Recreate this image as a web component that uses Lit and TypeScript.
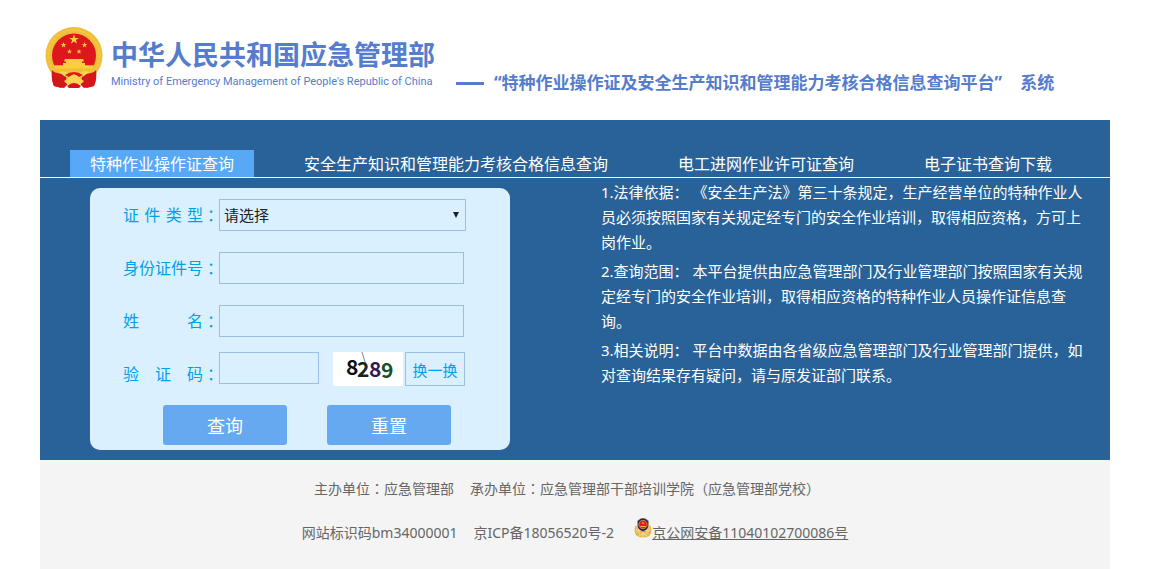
import { LitElement, html, css, svg } from "lit";
import { customElement, state } from "lit/decorators.js";

const STAR =
  "M0-1 .225-.309 .951-.309 .363 .118 .588 .809 0 .382-.588 .809-.363 .118-.951-.309-.225-.309Z";

const star = (x: number, y: number, size: number) =>
  svg`<path d=${STAR} fill="#f9cf3c" transform="translate(${x} ${y}) scale(${size})" />`;

@customElement("national-emblem")
class NationalEmblem extends LitElement {
  static styles = css`
    :host { display: block; }
    svg { display: block; }
  `;

  render() {
    return html`
      <svg width="58" height="62" viewBox="0 0 58 62" role="img" aria-label="国徽">
        <path d="M9 44 C6 49 7 54 9 59 L19 61 L24 56 H34 L39 61 L49 59 C51 54 52 49 49 44 Z" fill="#d5161b" />
        <circle cx="29" cy="28.500" r="28.500" fill="#efbe3a" />
        <circle cx="29" cy="28.500" r="25.500" fill="none" stroke="#f3c843" stroke-width="2" stroke-dasharray="3 1" />
        <circle cx="29" cy="28.500" r="22" fill="#dd171c" />
        <path d="M8 38.500 H50 L45 48 L35 53 H23 L13 48 Z" fill="#f2be35" />
        <path d="M7 43 C11 48 17 45 21 49 C22 53 20 59 16 61 L9 59 C7 54 6 49 7 43 Z" fill="#d5161b" />
        <path d="M51 43 C47 48 41 45 37 49 C36 53 38 59 42 61 L49 59 C51 54 52 49 51 43 Z" fill="#d5161b" />
        <path d="M14 45 C20 43 24 46 29 50 C34 46 38 43 44 45 L39 49 L34 51 L39 54 L35 58 C32 55 26 55 23 58 L19 54 L24 51 L19 49 Z" fill="#f9d553" />
        <path d="M20 48 Q29 42 38 48 L34 50 L29 47 L24 50 Z" fill="#dd171c" />
        <ellipse cx="29" cy="50.500" rx="4.500" ry="2.500" fill="#f9d553" />
        <path d="M22 59 Q29 53 36 59 L34 61 H24 Z" fill="#d5161b" />
        <path d="M20 32 H38 L39 34.500 H37 V36 H40 V39 H18 V36 H21 V34.500 H19 Z M10 38.500 H48 V41.500 H10 Z" fill="#f9cf3c" />
        ${star(29, 12.5, 5.2)} ${star(18.5, 18, 3)} ${star(39.5, 18, 3)} ${star(24.5, 24.5, 2.8)}
        ${star(34, 24.5, 2.8)}
      </svg>
    `;
  }
}

@customElement("police-badge")
class PoliceBadge extends LitElement {
  static styles = css`
    :host { display: block; }
    svg { display: block; }
  `;

  render() {
    return html`
      <svg width="18" height="20" viewBox="0 0 18 20" aria-hidden="true">
        <path d="M2 7 C0 10 0 16 3 18 Q9 21 15 18 C18 16 18 10 16 7 L13 13 H5 Z" fill="#ebb550" />
        <path d="M2 11 L6 16 M16 11 L12 16 M5 18 L9 15 L13 18 M9 14 V19" stroke="#fbe09a" stroke-width="1" fill="none" />
        <path d="M9 0 L12 1 L14.500 3 V8 Q14 12 9 13.500 Q4 12 3.500 8 V3 L6 1 Z" fill="#18246a" stroke="#c8953c" stroke-width=".6" />
        <circle cx="9" cy="6.500" r="4.200" fill="#da2318" stroke="#efa93a" stroke-width=".7" />
        <path d="M6.500 8.500 H11.500 M9 4 V6" stroke="#f6c545" stroke-width="1" />
      </svg>
    `;
  }
}

@customElement("captcha-image")
class CaptchaImage extends LitElement {
  static styles = css`
    :host { display: block; }
    svg { display: block; }
    .digit { font: bold 21px "Noto Sans CJK SC", sans-serif; }
  `;

  render() {
    return html`
      <svg width="70" height="34" viewBox="0 0 70 34" role="img" aria-label="验证码图片">
        <rect width="70" height="34" fill="#fff" />
        <path d="M29 0 L33 13" stroke="#7d8a80" stroke-width="1" />
        <text class="digit" x="13" y="23" fill="#0d0d14">8</text>
        <text class="digit" x="24" y="25" fill="#16261f">2</text>
        <text class="digit" x="36" y="25" fill="#35174f">8</text>
        <text class="digit" x="48" y="26" fill="#17502b">9</text>
      </svg>
    `;
  }
}

@customElement("query-form")
class QueryForm extends LitElement {
  static styles = css`
    :host { display: block; }
    .panel {
      display: flex;
      flex-direction: column;
      gap: 15px;
      padding: 11px 44px 5px 33px;
      border-radius: 10px;
      background: #dbf0ff;
    }
    .fields { display: flex; flex-direction: column; gap: 21px; }
    .row { display: flex; }
    .label {
      display: flex;
      flex: none;
      width: 96px;
      font-size: 16px;
      line-height: 32px;
      color: #00a0e9;
    }
    .name { width: 80px; text-align: justify; text-align-last: justify; white-space: nowrap; }
    .colon { font-family: "Noto Sans CJK TC", sans-serif; }
    .control {
      box-sizing: border-box;
      height: 32px;
      margin: 0;
      border: 1px solid #9bbfe1;
      border-radius: 0;
      background: transparent;
      font: inherit;
      font-size: 15px;
      color: #222;
      outline: none;
    }
    .text { flex: 1; min-width: 0; margin-right: 2px; padding: 0 5px; }
    .pick { display: grid; flex: 1; align-items: center; }
    .select { grid-area: 1 / 1; width: 100%; padding: 0 4px; appearance: none; }
    .arrow { grid-area: 1 / 1; justify-self: end; margin-right: 7px; pointer-events: none; }
    .verify { align-items: flex-start; }
    .verify .label { margin-top: 6px; }
    .code { width: 100px; margin-right: 14px; padding: 0 5px; }
    .swap { height: 34px; width: 60px; margin-left: 2px; padding: 0; color: #00a0e9; cursor: pointer; }
    .actions { display: flex; gap: 40px; padding-left: 40px; }
    .action {
      width: 124px;
      height: 40px;
      padding: 0;
      border: 0;
      border-radius: 3px;
      background: #66a9f0;
      font: inherit;
      font-size: 18px;
      color: #fff;
      cursor: pointer;
    }
  `;

  private label(target: string, text: string) {
    return html`<label class="label" for=${target}
      ><span class="name">${text}</span><span class="colon" lang="zh-TW">：</span></label
    >`;
  }

  render() {
    return html`
      <form class="panel" @submit=${(e: Event) => e.preventDefault()}>
        <div class="fields">
          <div class="row">
            ${this.label("type", "证 件 类 型")}
            <div class="pick">
              <select class="control select" id="type">
                <option>请选择</option>
              </select>
              <svg class="arrow" width="6" height="6" viewBox="0 0 6 6" aria-hidden="true">
                <path d="M0 0 H6 L3 6 Z" fill="#222" />
              </svg>
            </div>
          </div>
          <div class="row">
            ${this.label("number", "身份证件号")}
            <input class="control text" id="number" type="text" />
          </div>
          <div class="row">
            ${this.label("name", "姓 名")}
            <input class="control text" id="name" type="text" />
          </div>
        </div>
        <div class="row verify">
          ${this.label("code", "验 证 码")}
          <input class="control code" id="code" type="text" />
          <captcha-image></captcha-image>
          <button class="control swap" type="button">换一换</button>
        </div>
        <div class="actions">
          <button class="action" type="submit">查询</button>
          <button class="action" type="reset">重置</button>
        </div>
      </form>
    `;
  }
}

const TABS = [
  "特种作业操作证查询",
  "安全生产知识和管理能力考核合格信息查询",
  "电工进网作业许可证查询",
  "电子证书查询下载",
];

const NOTES = [
  "1.法律依据： 《安全生产法》第三十条规定，生产经营单位的特种作业人员必须按照国家有关规定经专门的安全作业培训，取得相应资格，方可上岗作业。",
  "2.查询范围： 本平台提供由应急管理部门及行业管理部门按照国家有关规定经专门的安全作业培训，取得相应资格的特种作业人员操作证信息查询。",
  "3.相关说明： 平台中数据由各省级应急管理部门及行业管理部门提供，如对查询结果存有疑问，请与原发证部门联系。",
];

@customElement("app-root")
class AppRoot extends LitElement {
  static styles = css`
    :host {
      display: flex;
      flex-direction: column;
      box-sizing: border-box;
      min-height: 100vh;
      padding: 0 47px 0 40px;
      background: #fff;
      font-family: "Noto Sans", "Noto Sans CJK SC", sans-serif;
      text-spacing-trim: space-all;
    }
    .header {
      display: flex;
      align-items: flex-start;
      box-sizing: border-box;
      height: 120px;
      padding: 27px 0 0 5px;
      color: #567ccd;
    }
    .brand { margin: 9px 21px 0 8px; }
    .ministry { margin: 0; font-size: 27px; font-weight: 700; line-height: 38px; white-space: nowrap; }
    .english {
      margin: 0;
      font-family: Roboto, sans-serif;
      font-size: 11px;
      line-height: 16px;
      white-space: nowrap;
    }
    .system {
      display: flex;
      align-items: center;
      margin: 43px 0 0;
      font-size: 17px;
      font-weight: 700;
      line-height: 26px;
      white-space: nowrap;
    }
    .dash { width: 28px; height: 3px; margin-right: 10px; background: #567ccd; }
    .suffix { margin-left: 18px; }
    .main { padding: 30px 0 10px; background: #286298; }
    .tabs { display: flex; gap: 30px; padding: 0 30px; border-bottom: 1px solid #fff; }
    .tab {
      padding: 2px 20px 0;
      font-size: 16px;
      line-height: 25px;
      color: #fff;
      text-decoration: none;
      white-space: nowrap;
    }
    .active { background: #57a8f7; }
    .content { display: flex; align-items: flex-start; padding: 0 19px 0 50px; }
    .query { flex: none; width: 420px; margin: 10px 91px 0 0; }
    .notes { flex: 1; display: flex; flex-direction: column; gap: 4px; padding-top: 2px; }
    .note { margin: 0; font-size: 15px; line-height: 25px; color: #fff; }
    .colon { font-family: "Noto Sans CJK TC", sans-serif; }
    .footer {
      flex: 1;
      display: flex;
      flex-direction: column;
      align-items: center;
      gap: 20px;
      padding: 16px 0 12px;
      background: #f4f4f4;
      font-size: 14px;
      line-height: 24px;
      color: #666;
    }
    .line { display: flex; gap: 16px; }
    .owners { padding-right: 16px; }
    .police { display: flex; margin-left: 4px; color: #666; text-decoration: none; }
    .record { text-decoration: underline; }
    .badge { margin-top: -3px; }
  `;

  @state() private active = 0;

  private colon = () => html`<span class="colon" lang="zh-TW">：</span>`;

  render() {
    return html`
      <header class="header">
        <national-emblem></national-emblem>
        <div class="brand">
          <h1 class="ministry">中华人民共和国应急管理部</h1>
          <p class="english">Ministry of Emergency Management of People's Republic of China</p>
        </div>
        <h2 class="system">
          <span class="dash"></span><span>“特种作业操作证及安全生产知识和管理能力考核合格信息查询平台”</span
          ><span class="suffix">系统</span>
        </h2>
      </header>
      <main class="main">
        <nav class="tabs">
          ${TABS.map(
            (tab, i) => html`<a
              class="tab ${i === this.active ? "active" : ""}"
              href="#"
              @click=${(e: Event) => {
                e.preventDefault();
                this.active = i;
              }}
              >${tab}</a
            >`,
          )}
        </nav>
        <div class="content">
          <query-form class="query"></query-form>
          <section class="notes">
            ${NOTES.map((note) => html`<p class="note">${note}</p>`)}
          </section>
        </div>
      </main>
      <footer class="footer">
        <div class="line owners">
          <span>主办单位${this.colon()}应急管理部</span>
          <span>承办单位${this.colon()}应急管理部干部培训学院（应急管理部党校）</span>
        </div>
        <div class="line">
          <span>网站标识码bm34000001</span>
          <span>京ICP备18056520号-2</span>
          <a class="police" href="#"
            ><police-badge class="badge"></police-badge><span class="record">京公网安备11040102700086号</span></a
          >
        </div>
      </footer>
    `;
  }
}
